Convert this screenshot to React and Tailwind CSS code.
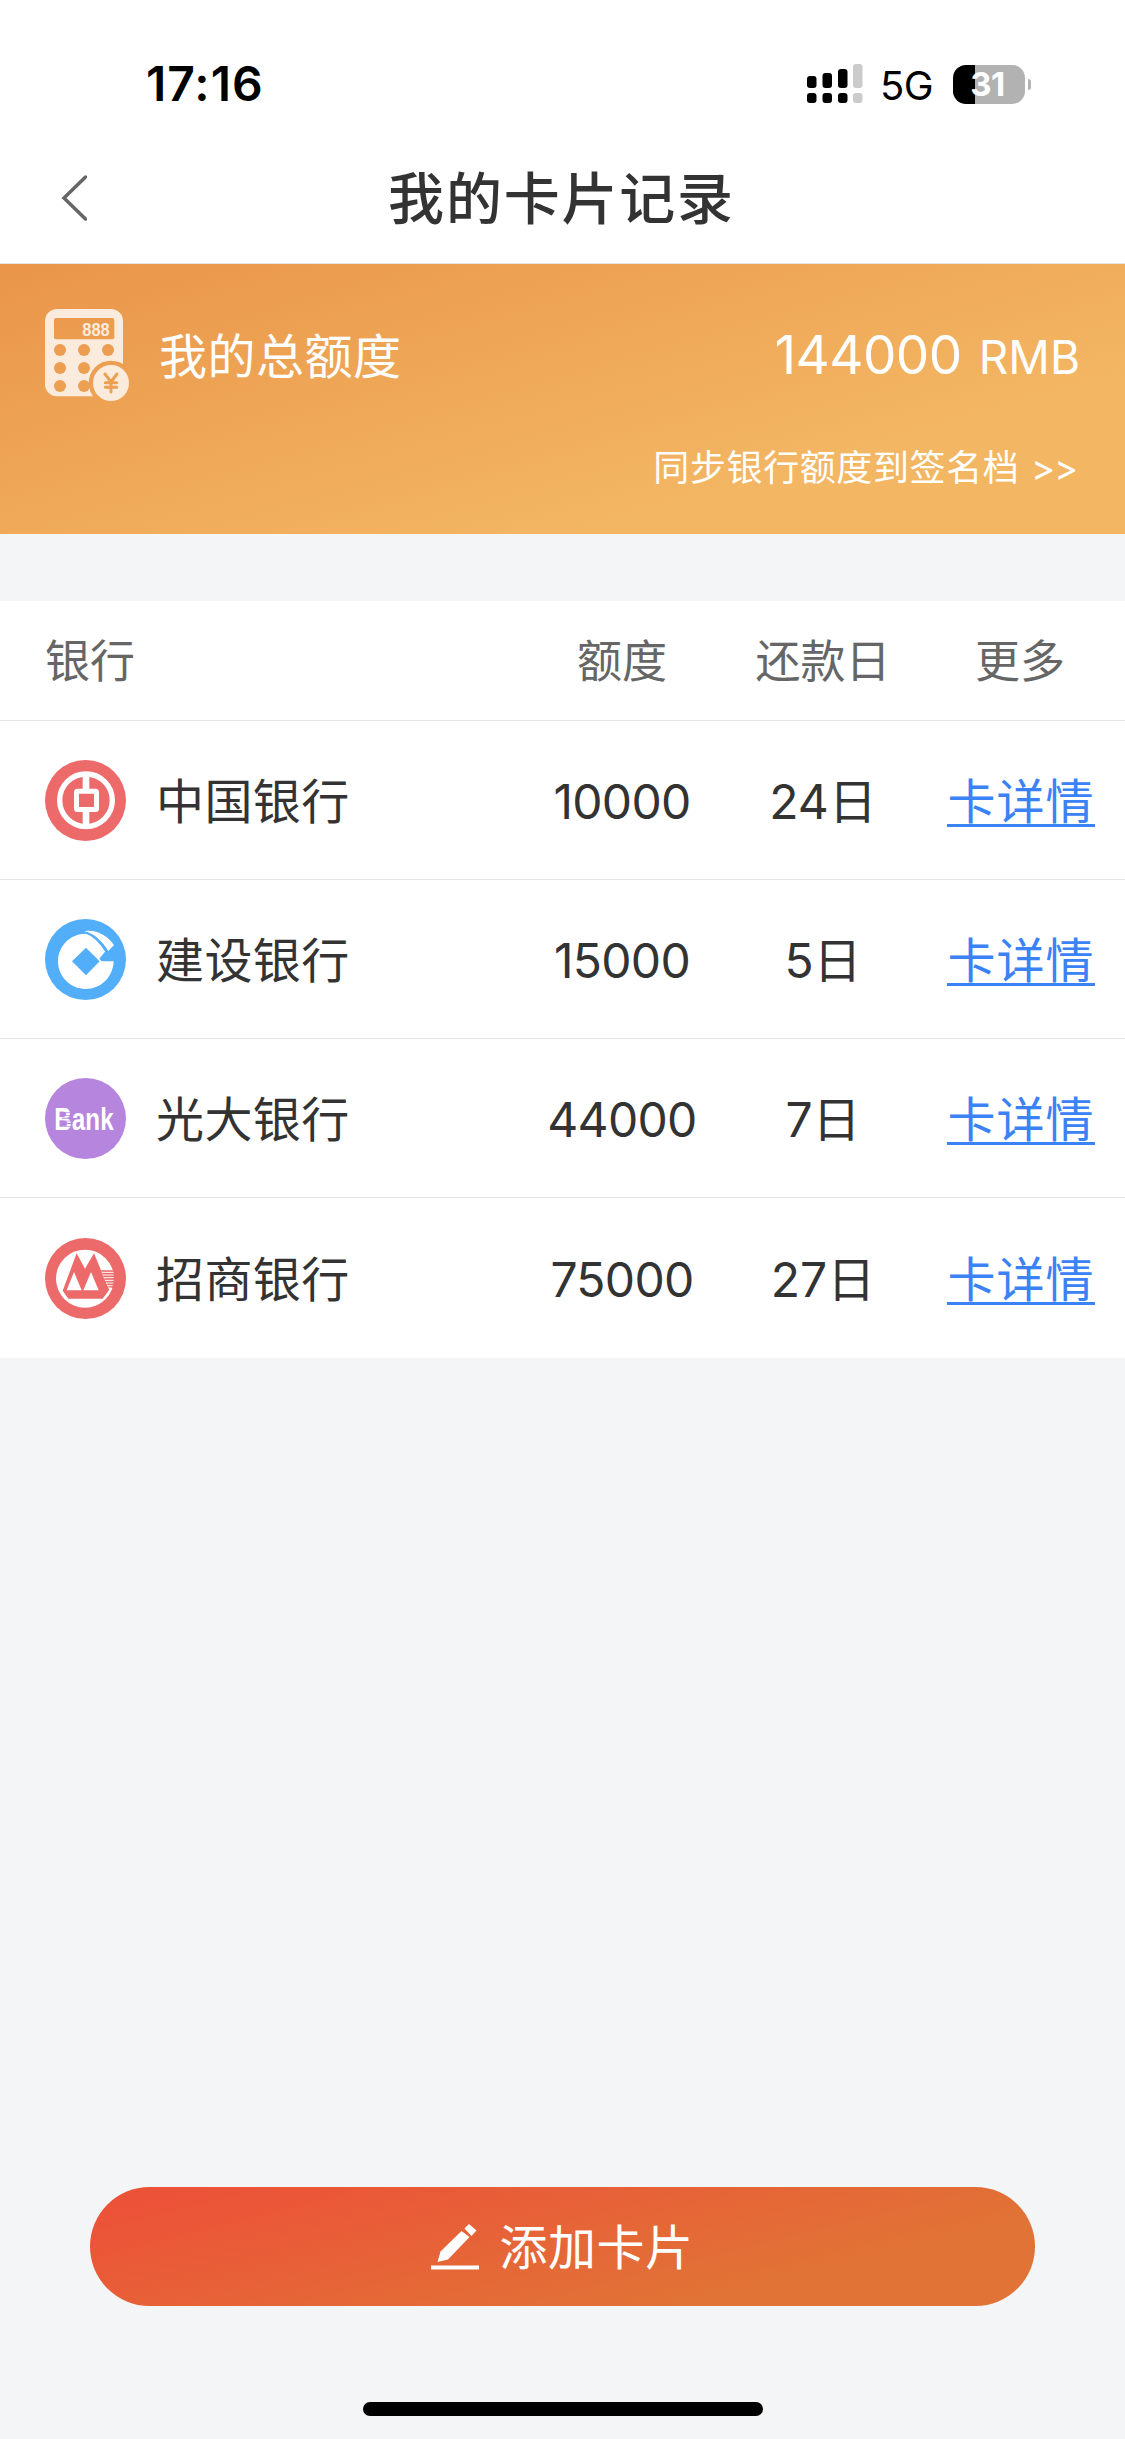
import React from "react";

const BocLogo = () => (
  <svg viewBox="0 0 243 243" className="size-[81px]">
    <circle cx="121.5" cy="121.5" r="121.5" fill="#ed6a6b" />
    <circle cx="123" cy="121" r="79" fill="none" stroke="#fff" strokeWidth="16" />
    <rect x="113" y="38" width="20" height="52" fill="#fff" />
    <rect x="113" y="152" width="20" height="52" fill="#fff" />
    <rect
      x="94.5"
      y="93.5"
      width="60"
      height="55"
      rx="3"
      fill="#ed6a6b"
      stroke="#fff"
      strokeWidth="15"
    />
  </svg>
);

const CcbLogo = () => (
  <svg viewBox="0 0 243 243" className="size-[81px]">
    <circle cx="121.5" cy="121.5" r="121.5" fill="#53aefa" />
    <path
      d="M122 44C145 46 166 71 181 97L163 119L170 127H206C204 175 168 210 122 210C76 210 39 173 39 127C39 81 76 44 122 44Z"
      fill="#fff"
    />
    <path d="M119 37C150 30 188 50 207 78L190 96C172 68 152 46 119 37Z" fill="#fff" />
    <path
      d="M119 40C148 50 170 76 185 101"
      fill="none"
      stroke="#53aefa"
      strokeWidth="4"
    />
    <path d="M123 86L164 127L123 169L81 127Z" fill="#53aefa" />
  </svg>
);

const CebLogo = () => (
  <svg viewBox="0 0 243 243" className="size-[81px] overflow-visible">
    <circle cx="121.5" cy="121.5" r="121.5" fill="#b686df" />
    <text
      x="28"
      y="157"
      fontFamily="Liberation Sans, sans-serif"
      fontWeight="700"
      fontSize="92"
      textLength="178"
      lengthAdjust="spacingAndGlyphs"
      fill="#fff"
    >
      Bank
    </text>
    <g fill="#b686df">
      <rect x="56" y="103" width="27" height="2" />
      <rect x="62" y="111" width="21" height="2" />
      <rect x="50" y="119" width="33" height="3" />
      <rect x="62" y="128" width="21" height="2" />
      <rect x="50" y="135" width="33" height="3" />
      <rect x="58" y="145" width="25" height="2" />
    </g>
  </svg>
);

const CmbLogo = () => (
  <svg viewBox="0 0 243 243" className="size-[81px]">
    <circle cx="121.5" cy="121.5" r="121.5" fill="#ed6a6b" />
    <circle cx="120" cy="122" r="87" fill="#fff" />
    <path d="M95 46L120 92L147 46L168 97L193 155L173 182H70L53 158Z" fill="#ed6a6b" />
    <path d="M87 102L65 157H110ZM138 102L115 157H161Z" fill="#fff" />
    <path d="M168 97H212V150H192Z" fill="#ed6a6b" />
    <path
      d="M170 103H206M173 111H206M176 119H206M180 127H206M183 135H205M187 143H203M190 150H200"
      stroke="#fff"
      strokeWidth="3"
    />
  </svg>
);

const CalculatorIcon = () => (
  <svg viewBox="0 0 252 276" className="h-[92px] w-[84px]">
    <mask id="calc">
      <rect width="234" height="262" rx="36" fill="#fff" />
      <rect x="27" y="27" width="181" height="64" rx="6" fill="#000" />
      {[123, 177, 231].map((y) =>
        [45, 117, 189].map((x) => <circle key={`${x}-${y}`} cx={x} cy={y} r="18" fill="#000" />)
      )}
      <circle cx="198" cy="222" r="67" fill="#000" />
      <circle cx="198" cy="222" r="54" fill="#fff" />
      <path
        d="M180 195L198 219L216 195M198 219V249M181 221H215M181 235H215"
        fill="none"
        stroke="#000"
        strokeWidth="9"
        strokeLinecap="round"
      />
    </mask>
    <rect width="252" height="276" fill="#faebdc" mask="url(#calc)" />
    <text
      x="112"
      y="81"
      fontFamily="Liberation Sans, sans-serif"
      fontWeight="700"
      fontSize="57"
      textLength="82"
      lengthAdjust="spacingAndGlyphs"
      fill="#faebdc"
    >
      888
    </text>
  </svg>
);

const SignalIcon = () => (
  <svg viewBox="0 0 56 40" className="h-10 w-14">
    <rect x="0" y="12" width="9.5" height="12" rx="3" />
    <rect x="15.5" y="9" width="9.5" height="15" rx="3" />
    <rect x="31" y="5" width="9.5" height="19" rx="3" />
    <rect x="46" y="0" width="9.5" height="24" rx="3" fill="#cbcbcb" />
    <rect x="0" y="29" width="9.5" height="10" rx="3" />
    <rect x="15.5" y="29" width="9.5" height="10" rx="3" />
    <rect x="31" y="29" width="9.5" height="10" rx="3" />
    <rect x="46" y="29" width="9.5" height="10" rx="3" fill="#cbcbcb" />
  </svg>
);

const cards = [
  { bank: "中国银行", Logo: BocLogo, amount: "10000", day: "24日" },
  { bank: "建设银行", Logo: CcbLogo, amount: "15000", day: "5日" },
  { bank: "光大银行", Logo: CebLogo, amount: "44000", day: "7日" },
  { bank: "招商银行", Logo: CmbLogo, amount: "75000", day: "27日" },
];

const StatusBar = () => (
  <div className="flex h-[132px] items-center justify-between pt-[36px] pl-[146px] pr-[94px] text-black">
    <div className="text-[48px] leading-none font-semibold tracking-[1px]">17:16</div>
    <div className="flex items-center">
      <SignalIcon />
      <span className="ml-[17px] w-[54px] pt-[3px] text-[40px] leading-none tracking-[-0.5px]">
        5G
      </span>
      <div className="ml-[19px] flex h-[39px] w-[72px] items-center justify-center rounded-[13px] bg-[linear-gradient(90deg,#000_22px,#b2b2b2_22px)] pr-[3px] text-[33px] leading-none font-bold tracking-[-0.5px] text-white">
        31
      </div>
      <div className="ml-[3px] h-[11px] w-[3px] rounded-r-full bg-[#b2b2b2]" />
    </div>
  </div>
);

const App = () => {
  return (
    <div className="flex h-[2439px] w-[1125px] flex-col bg-[#f3f5f7] font-['Inter','Noto_Sans_CJK_SC',sans-serif] text-[#333]">
      <header className="h-[264px] border-b border-[#e5e5e5] bg-white">
        <StatusBar />
        <div className="grid h-[131px] grid-cols-[200px_1fr_200px] items-center">
          <svg viewBox="0 0 26 46" className="ml-[61px] h-[46px] w-[26px]">
            <path
              d="M24.500 2L3 23L24.500 44"
              fill="none"
              stroke="#666"
              strokeWidth="3.500"
              strokeLinecap="round"
            />
          </svg>
          <h1 className="pt-[3px] pr-[2px] text-center text-[56px] leading-none font-medium tracking-[1.8px]">
            我的卡片记录
          </h1>
        </div>
      </header>

      <section className="h-[270px] bg-[linear-gradient(164deg,#ea9549,#f3b764_75%)] px-[45px] text-white">
        <div className="flex h-[182px] items-center">
          <CalculatorIcon />
          <span className="ml-[30px] pt-[4px] text-[48px] leading-none tracking-[0.5px]">
            我的总额度
          </span>
          <div className="ml-auto flex items-baseline gap-[17px] leading-none">
            <span className="text-[53px] tracking-[-0.5px]">144000</span>
            <span className="text-[46px]">RMB</span>
          </div>
        </div>
        <div className="flex h-[43px] items-center justify-end gap-[12px] pr-[3px] text-[36px] leading-none">
          <span className="tracking-[0.6px]">同步银行额度到签名档</span>
          <span className="tracking-[-1px]">&gt;&gt;</span>
        </div>
      </section>

      <section className="mt-[67px] bg-white">
        <div className="grid h-[120px] grid-cols-[522px_200px_200px_196px] items-center border-b border-[#e5e5e5] pt-[2px] text-center text-[45px] leading-none text-[#666]">
          <div className="pl-[45px] text-left">银行</div>
          <div>额度</div>
          <div className="pl-[2px]">还款日</div>
          <div>更多</div>
        </div>
        {cards.map(({ bank, Logo, amount, day }) => (
          <div
            key={bank}
            className="grid h-[159px] grid-cols-[522px_200px_200px_198px] items-center border-b border-[#e5e5e5] text-center text-[48px] leading-none last:h-[160px] last:border-b-0"
          >
            <div className="flex items-center gap-[30px] pl-[45px]">
              <Logo />
              <span className="pt-[4px] tracking-[0.4px]">{bank}</span>
            </div>
            <div className="pt-[3px] tracking-[-0.7px]">{amount}</div>
            <div className="pt-[3px] pl-[2px]">{day}</div>
            <div className="flex justify-center pt-[7px]">
              <a className="border-b-3 border-[#3b82f6] pb-[1px] leading-[42px] tracking-[1px] text-[#3b82f6]">
                卡详情
              </a>
            </div>
          </div>
        ))}
      </section>

      <button className="mx-[90px] mt-auto mb-[96px] flex h-[119px] shrink-0 items-center justify-center gap-[20px] rounded-full bg-[linear-gradient(166deg,#ec5238_8%,#e17336_75%)] text-[48px] leading-none text-white">
        <svg viewBox="0 0 48 46" className="h-[46px] w-[48px]" fill="currentColor">
          <path d="M30.500 7L38.500 13L17 35.500L6.500 38L9.500 27.500Z" />
          <path d="M38 0L45.500 6.500L40.500 12L33.500 4.500Z" />
          <rect y="41.500" width="48" height="4" />
        </svg>
        <span className="pt-[3px] tracking-[0.5px]">添加卡片</span>
      </button>
      <div className="mx-auto mb-[23px] h-[14px] w-[400px] shrink-0 rounded-full bg-black" />
    </div>
  );
};

export default App;
